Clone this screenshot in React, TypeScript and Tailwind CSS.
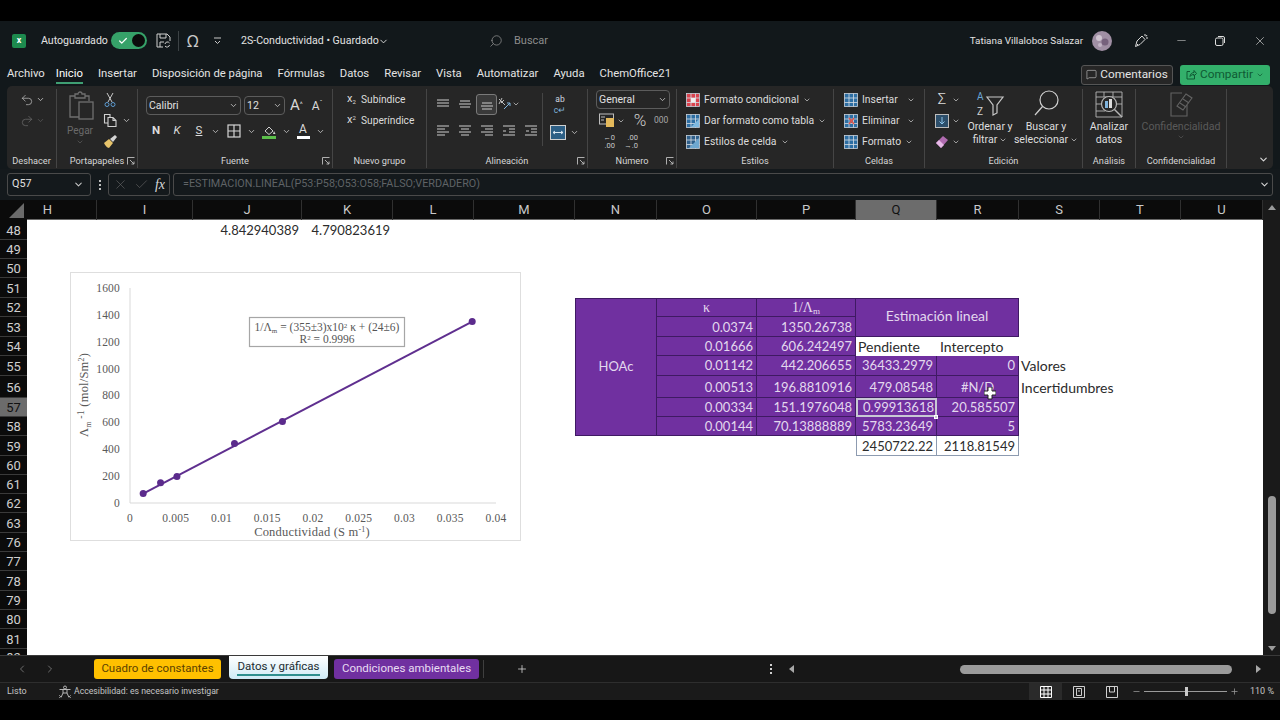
import type { ReactNode } from "react";
import { ChevronDown, ChevronLeft, ChevronRight, Check, X, Minus, Plus, Search, MessageSquare, Undo2, Redo2 } from "lucide-react";

const COLS = "grid-cols-[70px_96px_109px_91px_81px_101px_82px_100px_99px_81px_82px_81px_81px_82px]";
const ROWS = "grid-rows-[20px_19px_19px_20px_19px_20px_19px_20px_22px_19px_19px_20px_19px_19px_19px_20px_19px_19px_20px_19px_19px_20px_7px]";

const rowNums = [48, 49, 50, 51, 52, 53, 54, 55, 56, 57, 58, 59, 60, 61, 62, 63, 76, 77, 78, 79, 80, 81, 82];
const colNames = ["H", "I", "J", "K", "L", "M", "N", "O", "P", "Q", "R", "S", "T", "U"];

const points = [
  [0.0374, 1350.26738],
  [0.01666, 606.242497],
  [0.01142, 442.206655],
  [0.00513, 196.8810916],
  [0.00334, 151.1976048],
  [0.00144, 70.13888889],
];

function Chev({ c = "#c8c8c8", s = 9 }: { c?: string; s?: number }) {
  return <ChevronDown size={s} color={c} strokeWidth={2.2} className="shrink-0" />;
}

function Launcher() {
  return (
    <svg width="8" height="8" viewBox="0 0 8 8" fill="none" stroke="#bdbdbd" strokeWidth="0.9">
      <path d="M0.5 7.5V0.5H7.5M3 3L7 7M7 4.5V7H4.5" />
    </svg>
  );
}

function Group({ w, label, launcher, children }: { w: string; label: string; launcher?: boolean; children: ReactNode }) {
  return (
    <div className={`${w} shrink-0 h-full flex flex-col border-r border-[#454545]`}>
      <div className="h-[65px] flex">{children}</div>
      <div className="relative h-[14px] flex items-center justify-center text-[9.2px] text-[#d6d6d6]">
        {label}
        {launcher && (
          <span className="absolute right-[2px] top-[3px] flex">
            <Launcher />
          </span>
        )}
      </div>
    </div>
  );
}

function Row({ children, className = "" }: { children: ReactNode; className?: string }) {
  return <div className={`h-[21px] flex items-center ${className}`}>{children}</div>;
}

function Lines({ rows }: { rows: number[][] }) {
  return (
    <svg width="14" height="14" viewBox="0 0 14 14" stroke="#bdbdbd" strokeWidth="1.1">
      {rows.map((r, i) => (
        <line key={i} x1={r[0]} x2={r[1]} y1={r[2]} y2={r[2]} />
      ))}
    </svg>
  );
}

function ColorIcon({ kind }: { kind: "cond" | "table" | "cell" | "ins" | "del" | "fmt" }) {
  const fill = kind === "cond" ? "#d9434e" : kind === "cell" ? "#2f5f8a" : "#2d6ea3";
  return (
    <svg width="14" height="14" viewBox="0 0 14 14" className="shrink-0">
      <rect x="0.5" y="0.5" width="13" height="13" fill={fill} stroke="#c9d3dc" strokeWidth="0.8" />
      <path d="M0.5 5H13.5M0.5 9.5H13.5M5 0.5V13.5M9.5 0.5V13.5" stroke="#d5dde4" strokeWidth="0.8" />
      {kind === "table" && <path d="M5 13L13 5V13Z" fill="#7db8e0" />}
      {kind === "cell" && <path d="M3 13L13 3V13Z" fill="#6fa8d0" />}
      {kind === "del" && <path d="M5 4L10 10M10 4L5 10" stroke="#e0574f" strokeWidth="1.6" />}
      {kind === "cond" && <rect x="5" y="5" width="4.5" height="4.5" fill="#efefef" />}
    </svg>
  );
}

function TitleBar() {
  return (
    <div className="h-[39px] flex items-center bg-[#12181b] text-[11px] text-[#e2e2e2]">
      <div className="ml-[12px] w-[14px] h-[14px] rounded-[2px] bg-[#1d8a4e] flex items-center justify-center text-[9px] font-bold text-white">x</div>
      <span className="ml-[15px] w-[64px] mt-px text-[10.6px] whitespace-nowrap">Autoguardado</span>
      <div className="ml-[6px] w-[36px] h-[17px] rounded-full bg-[#36a269] flex items-center justify-between pl-[7px] pr-[2px]">
        <Check size={10} color="#fff" strokeWidth={3} />
        <span className="w-[13px] h-[13px] rounded-full bg-[#0c0c0c]" />
      </div>
      <svg className="ml-[9px]" width="15" height="15" viewBox="0 0 15 15" fill="none" stroke="#cfcfcf" strokeWidth="1">
        <path d="M1 1H11L14 4V8M1 1V14H7M4 1V5H10V1M4 14V9H8" />
        <path d="M9 11a2.5 2.5 0 0 1 4.5-1M13.5 12a2.5 2.5 0 0 1-4.5 1" />
      </svg>
      <span className="ml-[7px] w-px h-[20px] bg-[#3c4245]" />
      <span className="ml-[8px] w-[15px] text-[16px] leading-none text-[#c8c8c8] font-['Noto_Sans',sans-serif]">Ω</span>
      <svg className="ml-[11px]" width="9" height="9" viewBox="0 0 9 9" fill="none" stroke="#c8c8c8" strokeWidth="1">
        <path d="M1 2H8M2 5L4.5 7.5L7 5" />
      </svg>
      <span className="ml-[19px] w-[136px] mt-px text-[10.6px] whitespace-nowrap">2S-Conductividad • Guardado</span>
      <ChevronDown size={11} color="#e2e2e2" strokeWidth={2} className="ml-[1px] mt-px" />
      <Search size={14} color="#9a9a9a" strokeWidth={1.2} className="ml-[100px] -scale-x-100" />
      <span className="ml-[11px] mt-px text-[#8c8c8c]">Buscar</span>
      <div className="ml-auto flex items-center">
        <span className="mt-px text-[9.9px] whitespace-nowrap">Tatiana Villalobos Salazar</span>
        <svg className="ml-[9px]" width="20" height="20" viewBox="0 0 20 20">
          <circle cx="10" cy="10" r="10" fill="#a08fa4" />
          <circle cx="7" cy="7" r="3" fill="#cfc4d0" />
          <circle cx="13" cy="11" r="3.5" fill="#76617c" />
          <circle cx="8" cy="14" r="2" fill="#c2b4c6" />
        </svg>
        <svg className="ml-[22px]" width="15" height="15" viewBox="0 0 15 15" fill="none" stroke="#dcdcdc" strokeWidth="1">
          <path d="M1.5 13.5L3 8L8 3L11 6.5L6 11.5L1.5 13.5ZM3 11L4 12M11 1V3M13 2L12 3.5M14 5H12" />
        </svg>
        <Minus size={13} color="#dcdcdc" strokeWidth={1} className="ml-[26px]" />
        <svg className="ml-[27px]" width="10" height="10" viewBox="0 0 10 10" fill="none" stroke="#dcdcdc" strokeWidth="1">
          <rect x="0.5" y="2" width="7.5" height="7.5" rx="1.5" />
          <path d="M3 0.5H8A1.5 1.5 0 0 1 9.5 2V7" />
        </svg>
        <X size={14} color="#dcdcdc" strokeWidth={1.1} className="ml-[28px] mr-[13px]" />
      </div>
    </div>
  );
}

function MenuBar() {
  const items = ["Archivo", "Inicio", "Insertar", "Disposición de página", "Fórmulas", "Datos", "Revisar", "Vista", "Automatizar", "Ayuda", "ChemOffice21"];
  return (
    <div className="h-[26px] flex items-center bg-[#12181b] pl-[7px] text-[11.3px] text-[#e4e4e4]">
      <div className="flex items-center gap-[15px]">
        {items.map((t) => (
          <span key={t} className={`whitespace-nowrap border-b-2 leading-[17px] pt-[3px] ${t === "Inicio" ? "border-[#3f9f73] text-white -ml-[4px]" : "border-transparent"}`}>
            {t}
          </span>
        ))}
      </div>
      <div className="ml-auto flex items-center gap-[7px] mr-[10px] mt-[3px] text-[11.8px]">
        <div className="w-[92px] h-[20px] flex items-center justify-center gap-[3px] rounded-[3px] border border-[#555] bg-[#262626]">
          <MessageSquare size={11} color="#dedede" strokeWidth={1.2} />
          <span>Comentarios</span>
        </div>
        <div className="w-[90px] h-[20px] flex items-center justify-center gap-[3px] rounded-[3px] bg-[#33b06b] text-[#0f5a33]">
          <svg width="11" height="11" viewBox="0 0 11 11" fill="none" stroke="#0f5a33" strokeWidth="1">
            <path d="M4 2.5H1V10H8.5V7M4 7.5C4 5 6 3.5 8 3.5V1.5L10.5 4.5L8 7V5.5C6.5 5.5 5 6 4 7.5Z" />
          </svg>
          <span>Compartir</span>
          <Chev c="#0f5a33" s={8} />
        </div>
      </div>
    </div>
  );
}

function Select({ w, text }: { w: string; text: string }) {
  return (
    <div className={`${w} h-[19px] flex items-center justify-between rounded-[4px] border border-[#5c5c5c] px-[2px] text-[10.5px] text-[#e0e0e0]`}>
      <span>{text}</span>
      <Chev />
    </div>
  );
}

function Ribbon() {
  const big = "flex flex-col items-center text-[10.6px] leading-[13px] text-[#dedede]";
  return (
    <div className="mx-[7px] h-[83px] pt-[3px] pb-[1px] flex rounded-[5px] bg-[#262626] text-[#dcdcdc]">
      <Group w="w-[50px]" label="Deshacer">
        <div className="pl-[13px]">
          <Row className="gap-[2px]">
            <Undo2 size={14} color="#c4c4c4" strokeWidth={1.2} />
            <Chev />
          </Row>
          <Row className="gap-[2px]">
            <Redo2 size={14} color="#6e6e6e" strokeWidth={1.2} />
            <Chev c="#555" />
          </Row>
        </div>
      </Group>
      <Group w="w-[81px]" label="Portapapeles" launcher>
        <div className="w-[46px] flex flex-col items-center text-[10px] text-[#6a6a6a]">
          <svg className="mt-[2px] ml-[3px]" width="25" height="30" viewBox="0 0 25 30" fill="none" stroke="#6f6f6f" strokeWidth="1.3">
            <path d="M6 5H1V26H10M16 5H20V10M6 3H9A2 2 0 0 1 13 3H16V7H6Z" />
            <rect x="10" y="11" width="14" height="17" />
          </svg>
          <span className="mt-[2px]">Pegar</span>
          <Chev c="#5c5c5c" s={8} />
        </div>
        <div>
          <Row>
            <svg width="14" height="16" viewBox="0 0 14 16" fill="none" stroke="#c8c8c8" strokeWidth="1">
              <path d="M4 1L9 10M10 1L5 10" />
              <circle cx="4" cy="12.5" r="2" stroke="#5c9bd1" />
              <circle cx="10" cy="12.5" r="2" stroke="#5c9bd1" />
            </svg>
          </Row>
          <Row className="gap-[4px]">
            <svg width="15" height="15" viewBox="0 0 15 15" fill="none" stroke="#d0d0d0" strokeWidth="1.1">
              <path d="M5 10H1.5V1.5H7V4" />
              <path d="M5 4.5H10L13 7.5V13.5H5ZM10 4.5V7.5H13" />
            </svg>
            <Chev />
          </Row>
          <Row>
            <svg width="15" height="15" viewBox="0 0 15 15">
              <path d="M1 9L6 5L10 9L6 14C4 14 2 11 1 9Z" fill="#e7c46b" />
              <path d="M7 5L12 1L14 3L10 8Z" fill="#d4d4d4" />
            </svg>
          </Row>
        </div>
      </Group>
      <Group w="w-[195px]" label="Fuente" launcher>
        <div className="pl-[8px]">
          <div className="mt-[7px] flex items-center gap-[3px]">
            <Select w="w-[95px]" text="Calibri" />
            <Select w="w-[41px]" text="12" />
            <span className="ml-[2px] text-[15px] leading-none text-[#d8d8d8]">A<sup className="text-[7px]">^</sup></span>
            <span className="ml-[6px] text-[12px] leading-none text-[#d8d8d8]">A<sup className="text-[7px]">ˇ</sup></span>
          </div>
          <div className="mt-[6px] h-[20px] flex items-center">
            <span className="w-[20px] text-center text-[11.5px] font-bold">N</span>
            <span className="w-[22px] text-center text-[11.5px] italic">K</span>
            <span className="w-[22px] text-center text-[11.5px] underline">S</span>
            <span className="w-[10px] flex justify-center"><Chev /></span>
            <span className="w-[27px] flex justify-center">
              <svg width="14" height="14" viewBox="0 0 14 14" fill="none" stroke="#d4d4d4" strokeWidth="1.2">
                <rect x="1" y="1" width="12" height="12" />
                <path d="M1 7H13M7 1V13" />
              </svg>
            </span>
            <span className="w-[8px] flex justify-center"><Chev /></span>
            <span className="w-[27px] flex justify-center">
              <svg width="16" height="15" viewBox="0 0 16 15">
                <path d="M4 7L8 3L12 7L8 10.5Z" fill="none" stroke="#cfcfcf" strokeWidth="1" />
                <path d="M13 7L14.5 10H12Z" fill="#cfcfcf" />
                <rect x="1" y="12" width="14" height="3" fill="#5bbf4a" />
              </svg>
            </span>
            <span className="w-[8px] flex justify-center"><Chev /></span>
            <span className="w-[26px] flex flex-col items-center text-[12px] leading-[11px]">
              A<span className="w-[13px] h-[3px] bg-white mt-[1px]" />
            </span>
            <span className="w-[8px] flex justify-center"><Chev /></span>
          </div>
        </div>
      </Group>
      <Group w="w-[94px]" label="Nuevo grupo">
        <div className="pl-[14px] text-[10.2px]">
          <Row>
            <span className="w-[14px] text-[11px]">x<sub className="text-[6px]">2</sub></span>
            Subíndice
          </Row>
          <Row>
            <span className="w-[14px] text-[11px]">x<sup className="text-[6px]">2</sup></span>
            Superíndice
          </Row>
        </div>
      </Group>
      <Group w="w-[161px]" label="Alineación" launcher>
        <div className="w-[116px] pl-[5px] border-r border-[#454545] mt-[4px] mb-[8px]">
          <div className="h-[22px] flex items-center">
            <span className="w-[22px] flex justify-center"><Lines rows={[[1, 13, 3], [1, 13, 6], [1, 13, 9]]} /></span>
            <span className="w-[22px] flex justify-center"><Lines rows={[[2, 12, 4], [1, 13, 7], [2, 12, 10]]} /></span>
            <span className="w-[21px] h-[21px] flex items-center justify-center rounded-[3px] border border-[#7a7a7a] bg-[#3a3a3a]"><Lines rows={[[2, 12, 6], [1, 13, 9], [2, 12, 12]]} /></span>
            <span className="w-[23px] flex items-center justify-center gap-[1px]">
              <svg width="14" height="14" viewBox="0 0 14 14" fill="none" stroke="#bdbdbd" strokeWidth="1">
                <path d="M2 2L8 8M5 1L2 7M4 6L7 3" />
                <path d="M7 12L13 6M13 6H10M13 6V9" stroke="#7fb3dc" />
              </svg>
              <Chev s={8} />
            </span>
          </div>
          <div className="mt-[5px] h-[22px] flex items-center">
            <span className="w-[22px] flex justify-center"><Lines rows={[[1, 13, 2], [1, 9, 5], [1, 13, 8], [1, 9, 11]]} /></span>
            <span className="w-[22px] flex justify-center"><Lines rows={[[1, 13, 2], [3, 11, 5], [1, 13, 8], [3, 11, 11]]} /></span>
            <span className="w-[22px] flex justify-center"><Lines rows={[[1, 13, 2], [5, 13, 5], [1, 13, 8], [5, 13, 11]]} /></span>
            <span className="w-[22px] flex justify-center"><Lines rows={[[1, 13, 2], [7, 13, 5], [1, 4, 7], [7, 13, 8], [1, 13, 11]]} /></span>
            <span className="w-[22px] flex justify-center"><Lines rows={[[1, 13, 2], [7, 13, 5], [2, 5, 7], [7, 13, 8], [1, 13, 11]]} /></span>
          </div>
        </div>
        <div className="pl-[7px]">
          <div className="mt-[5px] h-[23px] w-[20px] flex flex-col items-center text-[8.5px] leading-[11px] text-[#cfd8e0]">
            <span>ab</span>
            <span className="text-[#7fb3dc]">c↵</span>
          </div>
          <div className="mt-[4px] h-[22px] flex items-center gap-[4px]">
            <svg width="16" height="15" viewBox="0 0 16 15" fill="none">
              <rect x="0.5" y="0.5" width="15" height="14" stroke="#d0d0d0" fill="#2d5f85" />
              <path d="M3 7.5H13M3 7.5L5 6M3 7.5L5 9M13 7.5L11 6M13 7.5L11 9" stroke="#d9e6f0" />
            </svg>
            <Chev />
          </div>
        </div>
      </Group>
      <Group w="w-[89px]" label="Número" launcher>
        <div className="pl-[8px]">
          <Select w="w-[74px] mt-px" text="General" />
          <div className="mt-[1px] h-[21px] flex items-center text-[#cfcfcf]">
            <svg className="ml-[3px]" width="16" height="15" viewBox="0 0 16 15">
              <rect x="0.5" y="1" width="14" height="10" fill="none" stroke="#bdbdbd" />
              <rect x="7" y="5" width="8" height="9" fill="#e4b95b" />
              <path d="M2 4H6M2 7H5" stroke="#bdbdbd" />
            </svg>
            <span className="ml-[2px]"><Chev s={8} /></span>
            <span className="ml-[5px] w-[20px] text-center text-[17px] font-light leading-none">%</span>
            <span className="ml-[4px] text-[8.5px] text-[#a8a8a8]">000</span>
          </div>
          <div className="h-[21px] flex items-center text-[7.5px] leading-[8px] text-[#c8c8c8]">
            <span className="ml-[3px] w-[16px] text-right">←0<br />.00</span>
            <span className="ml-[7px] w-[16px] text-right">.00<br />→.0</span>
          </div>
        </div>
      </Group>
      <Group w="w-[157px]" label="Estilos">
        <div className="pl-[9px] text-[10.4px]">
          <Row className="gap-[4px]">
            <ColorIcon kind="cond" />
            Formato condicional
            <Chev s={8} />
          </Row>
          <Row className="gap-[4px]">
            <ColorIcon kind="table" />
            Dar formato como tabla
            <Chev s={8} />
          </Row>
          <Row className="gap-[4px]">
            <ColorIcon kind="cell" />
            Estilos de celda
            <Chev s={8} />
          </Row>
        </div>
      </Group>
      <Group w="w-[91px]" label="Celdas">
        <div className="pl-[10px] text-[10.4px]">
          <Row className="gap-[4px]">
            <ColorIcon kind="ins" />
            <span className="w-[41px]">Insertar</span>
            <Chev s={8} />
          </Row>
          <Row className="gap-[4px]">
            <ColorIcon kind="del" />
            <span className="w-[41px]">Eliminar</span>
            <Chev s={8} />
          </Row>
          <Row className="gap-[4px]">
            <ColorIcon kind="fmt" />
            Formato
            <Chev s={8} />
          </Row>
        </div>
      </Group>
      <Group w="w-[158px]" label="Edición">
        <div className="w-[39px] pl-[10px]">
          <Row className="gap-[3px]">
            <span className="w-[14px] text-center text-[15px] font-light leading-none">Σ</span>
            <Chev s={8} />
          </Row>
          <Row className="gap-[3px]">
            <svg width="14" height="14" viewBox="0 0 14 14" fill="none">
              <rect x="0.5" y="0.5" width="13" height="13" fill="#2d4f6b" stroke="#bdbdbd" />
              <path d="M7 3V10M4.5 7.5L7 10L9.5 7.5" stroke="#8cc4ea" />
            </svg>
            <Chev s={8} />
          </Row>
          <Row className="gap-[3px]">
            <svg width="14" height="14" viewBox="0 0 14 14">
              <path d="M1 8L8 1L13 5L6 13Z" fill="#b06bb0" />
              <path d="M1 8L4 5L9 10L6 13Z" fill="#e6b8e6" />
            </svg>
            <Chev s={8} />
          </Row>
        </div>
        <div className={`w-[52px] ${big}`}>
          <svg className="h-[31px]" width="30" height="31" viewBox="0 0 30 31" fill="none">
            <text x="2" y="11" fontSize="10" fill="#6aa6d8" fontFamily="Roboto">A</text>
            <text x="2" y="26" fontSize="10" fill="#d4d4d4" fontFamily="Roboto">Z</text>
            <path d="M12 8H28L22 16V24L18 26V16Z" stroke="#c8c8c8" strokeWidth="1.2" />
          </svg>
          <span>Ordenar y</span>
          <span className="flex items-center gap-[2px]">filtrar <Chev s={8} /></span>
        </div>
        <div className={`w-[60px] ${big}`}>
          <svg className="h-[31px]" width="30" height="31" viewBox="0 0 30 31" fill="none" stroke="#d0d0d0" strokeWidth="1.2">
            <circle cx="18" cy="11" r="9" />
            <path d="M11.5 17.5L4 26" />
          </svg>
          <span>Buscar y</span>
          <span className="flex items-center gap-[2px] whitespace-nowrap">seleccionar <Chev s={8} /></span>
        </div>
      </Group>
      <Group w="w-[53px]" label="Análisis">
        <div className={`w-full ${big}`}>
          <svg className="h-[31px]" width="29" height="31" viewBox="0 0 29 31" fill="none" stroke="#b5b5b5">
            <path d="M1 3H27V28H1ZM1 8H27M1 15H6M1 22H10M22 15H27M9 3V8M18 3V8" strokeWidth="0.9" />
            <circle cx="14" cy="15" r="7.5" fill="#262626" strokeWidth="1.2" />
            <rect x="10" y="12" width="3" height="7" fill="#7fb3dc" stroke="none" />
            <rect x="14" y="10" width="3" height="9" fill="#dcdcdc" stroke="none" />
            <path d="M19.5 20.5L27 28" strokeWidth="1.4" />
          </svg>
          <span>Analizar</span>
          <span>datos</span>
        </div>
      </Group>
      <Group w="w-[91px]" label="Confidencialidad">
        <div className={`w-full ${big} !text-[#5a5a5a]`}>
          <svg className="h-[31px]" width="26" height="31" viewBox="0 0 26 31" fill="none" stroke="#636363" strokeWidth="1.1">
            <path d="M14 4H3V27H19V16" />
            <path d="M9 17L18 5L24 9L15 21Z" />
            <path d="M12 14L18 18M15 10L21 14" />
          </svg>
          <span className="whitespace-nowrap">Confidencialidad</span>
          <Chev c="#555" s={8} />
        </div>
      </Group>
      <div className="flex-1 flex items-end justify-center pb-[3px] pl-[26px]">
        <ChevronDown size={11} color="#d8d8d8" strokeWidth={2.5} />
      </div>
    </div>
  );
}

function FormulaBar() {
  return (
    <div className="h-[31px] flex px-[7px] py-[4px] bg-[#14191c] text-[10.8px]">
      <div className="w-[84px] flex items-center justify-between rounded-[3px] border border-[#4a4a4a] pl-[4px] pr-[6px] text-[#e0e0e0]">
        Q57
        <Chev s={11} />
      </div>
      <div className="w-[17px] flex flex-col items-center justify-center gap-[2px]">
        <span className="w-[2px] h-[2px] bg-[#bdbdbd]" />
        <span className="w-[2px] h-[2px] bg-[#bdbdbd]" />
        <span className="w-[2px] h-[2px] bg-[#bdbdbd]" />
      </div>
      <div className="w-[62px] flex items-center justify-between rounded-[3px] border border-[#4a4a4a] px-[4px]">
        <X size={15} color="#666" strokeWidth={1} />
        <Check size={15} color="#666" strokeWidth={1} />
        <span className="font-['Liberation_Serif',serif] italic text-[14px] text-[#d8d8d8]">fx</span>
      </div>
      <div className="ml-[3px] flex-1 flex items-center justify-between rounded-[3px] border border-[#4a4a4a] pl-[9px] pr-[2px] text-[#5f6366]">
        =ESTIMACION.LINEAL(P53:P58;O53:O58;FALSO;VERDADERO)
        <Chev s={11} c="#d8d8d8" />
      </div>
    </div>
  );
}

function ColHeaders() {
  return (
    <div className="h-[20px] flex bg-[#0b0b0b]">
      <div className="w-[27px] flex items-end justify-end pr-[3px] pb-[2px]">
        <span className="w-0 h-0 border-l-[15px] border-l-transparent border-b-[15px] border-b-[#6a6a6a]" />
      </div>
      <div className={`grid ${COLS} w-[1236px] border-b border-[#6a6a6a] text-[13px] text-[#c9c9c9]`}>
        {colNames.map((c) => (
          <div key={c} className={`flex items-center justify-center border-r border-[#303030] ${c === "Q" ? "bg-[#6c6c6c] text-[#111]" : ""} ${c === "H" ? "pr-[28px]" : ""}`}>
            {c}
          </div>
        ))}
      </div>
      <div className="flex-1 bg-[#1a1a1a] flex justify-center pt-[5px] pl-[1px]">
        <span className="w-0 h-0 border-x-[4px] border-x-transparent border-b-[5px] border-b-[#9a9a9a]" />
      </div>
    </div>
  );
}

function Chart() {
  const x = (v: number) => 130 + v * 9150;
  const y = (v: number) => 503 - v * 0.1344;
  const xt = ["0", "0.005", "0.01", "0.015", "0.02", "0.025", "0.03", "0.035", "0.04"];
  const yt = [0, 200, 400, 600, 800, 1000, 1200, 1400, 1600];
  return (
    <svg className="absolute left-[43px] top-[52px]" width="451" height="269" viewBox="70 272 451 269" fontFamily="Liberation Serif" fill="#595959">
      <rect x="70.5" y="272.5" width="450" height="268" fill="#fff" stroke="#dedede" />
      <path d="M130 288V503H496" fill="none" stroke="#d9d9d9" />
      {xt.map((t, i) => (
        <text key={t} x={130 + i * 45.75} y="522" fontSize="11.5" textAnchor="middle" letterSpacing="0.2">{t}</text>
      ))}
      {yt.map((t) => (
        <text key={t} x="120" y={y(t) + 4} fontSize="11.5" textAnchor="end" letterSpacing="0.2">{t}</text>
      ))}
      <line x1={x(0.00144)} y1={y(70)} x2={x(0.0374)} y2={y(1350)} stroke="#5f2f8f" strokeWidth="2" />
      {points.map((p) => (
        <circle key={p[0]} cx={x(p[0])} cy={y(p[1])} r="3.5" fill="#5b2b8c" />
      ))}
      <text x="312" y="536" fontSize="12.5" textAnchor="middle" letterSpacing="0.2">
        Conductividad (S m<tspan fontSize="8" dy="-4">-1</tspan><tspan dy="4">)</tspan>
      </text>
      <text transform="translate(88 395) rotate(-90)" fontSize="12.5" textAnchor="middle" letterSpacing="0.2">
        Λ<tspan fontSize="8" dy="3">m</tspan><tspan fontSize="10" dy="-7"> -1</tspan><tspan dy="4"> (mol/Sm</tspan><tspan fontSize="8" dy="-4">2</tspan><tspan dy="4">)</tspan>
      </text>
      <rect x="249.5" y="317.5" width="155" height="29" fill="#fff" stroke="#a6a6a6" strokeWidth="1.2" />
      <text x="327" y="331" fontSize="11.5" textAnchor="middle" fill="#555">
        1/Λ<tspan fontSize="7" dy="2">m</tspan><tspan dy="-2"> = (355±3)x10</tspan><tspan fontSize="7" dy="-3">2</tspan><tspan dy="3"> κ + (24±6)</tspan>
      </text>
      <text x="327" y="343" fontSize="11.5" textAnchor="middle" fill="#555">
        R<tspan fontSize="7" dy="-3">2</tspan><tspan dy="3"> = 0.9996</tspan>
      </text>
    </svg>
  );
}

function Cell({ pos, children, v = "right" }: { pos: string; children?: ReactNode; v?: "right" | "center" }) {
  return (
    <div className={`${pos} flex items-center ${v === "right" ? "justify-end pr-[3px]" : "justify-center"} bg-[#7030a0] border-r border-b border-[#3f1a63] text-[#e3d8ee]`}>
      {children}
    </div>
  );
}

function Sheet() {
  return (
    <div className="flex h-[435px]">
      <div className={`grid ${ROWS} w-[27px] bg-[#0b0b0b] text-[13px] text-[#cfcfcf] overflow-hidden`}>
        {rowNums.map((n) => (
          <div key={n} className={`flex justify-center border-b border-[#3a3a3a] leading-[15px] ${n === 82 ? "items-start pt-[1px]" : "items-center pt-[1px]"} ${n === 57 ? "bg-[#6c6c6c] text-[#111]" : ""}`}>
            {n}
          </div>
        ))}
      </div>
      <div className={`relative grid ${COLS} ${ROWS} w-[1236px] bg-white text-[13px] leading-none text-[#2c2c2c] font-['Lato',sans-serif] overflow-hidden`}>
        <div className="col-start-3 row-start-1 flex items-center justify-end pr-[3px]">4.842940389</div>
        <div className="col-start-4 row-start-1 flex items-center justify-end pr-[3px]">4.790823619</div>

        <Cell pos="col-start-7 row-start-5 row-span-7 border-l border-t pb-[2px]" v="center">HOAc</Cell>
        <Cell pos="col-start-8 row-start-5 border-t" v="center"><span className="font-['Liberation_Serif',serif] text-[14px]">κ</span></Cell>
        <Cell pos="col-start-9 row-start-5 border-t" v="center"><span className="font-['Liberation_Serif',serif] text-[14px]">1/Λ<sub className="text-[9px]">m</sub></span></Cell>
        <Cell pos="col-start-10 col-span-2 row-start-5 row-span-2 border-t pb-[3px] text-[14px]" v="center">Estimación lineal</Cell>

        <Cell pos="col-start-8 row-start-6 pt-px">0.0374</Cell>
        <Cell pos="col-start-9 row-start-6 pt-px">1350.26738</Cell>
        <Cell pos="col-start-8 row-start-7">0.01666</Cell>
        <Cell pos="col-start-9 row-start-7">606.242497</Cell>
        <div className="col-start-10 row-start-7 flex items-center pl-[2px] text-[14px]">Pendiente</div>
        <div className="col-start-11 row-start-7 flex items-center pl-[3px] text-[14px]">Intercepto</div>
        <Cell pos="col-start-8 row-start-8">0.01142</Cell>
        <Cell pos="col-start-9 row-start-8">442.206655</Cell>
        <Cell pos="col-start-10 row-start-8">36433.2979</Cell>
        <Cell pos="col-start-11 row-start-8">0</Cell>
        <div className="col-start-12 row-start-8 flex items-center pl-[2px] text-[14px]">Valores</div>
        <Cell pos="col-start-8 row-start-9 pt-px">0.00513</Cell>
        <Cell pos="col-start-9 row-start-9 pt-px">196.8810916</Cell>
        <Cell pos="col-start-10 row-start-9 pt-px">479.08548</Cell>
        <Cell pos="col-start-11 row-start-9 pt-px" v="center">#N/D</Cell>
        <div className="col-start-12 col-span-2 row-start-9 flex items-center pl-[2px] pt-px text-[14px]">Incertidumbres</div>
        <Cell pos="col-start-8 row-start-10">0.00334</Cell>
        <Cell pos="col-start-9 row-start-10">151.1976048</Cell>
        <div className="col-start-10 row-start-10 flex items-center justify-end pr-[1px] bg-[#7030a0] border-2 border-[#c8c8d4] text-[#e3d8ee]">0.99913618</div>
        <Cell pos="col-start-11 row-start-10">20.585507</Cell>
        <Cell pos="col-start-8 row-start-11">0.00144</Cell>
        <Cell pos="col-start-9 row-start-11">70.13888889</Cell>
        <Cell pos="col-start-10 row-start-11">5783.23649</Cell>
        <Cell pos="col-start-11 row-start-11">5</Cell>
        <div className="col-start-10 row-start-12 flex items-center justify-end pr-[3px] pt-px border border-t-0 border-[#8d9bb0]">2450722.22</div>
        <div className="col-start-11 row-start-12 flex items-center justify-end pr-[3px] pt-px border border-l-0 border-t-0 border-[#8d9bb0]">2118.81549</div>

        <Chart />
        <span className="absolute left-[907px] top-[195px] w-[4px] h-[4px] bg-[#c8c8d4] border border-white" />
        <svg className="absolute left-[957px] top-[167px]" width="12" height="14" viewBox="0 0 12 14">
          <path d="M4 0H8V4H12V8H8V12H4V8H0V4H4Z" fill="#fff" stroke="#222" strokeWidth="1" />
        </svg>
      </div>
      <div className="flex-1 bg-[#1a1a1a] flex flex-col items-center justify-end pl-[1px]">
        <span className="w-[8px] h-[118px] rounded-full bg-[#9a9a9a] mb-[32px]" />
        <span className="w-0 h-0 border-x-[4px] border-x-transparent border-t-[5px] border-t-[#9a9a9a] mb-[4px]" />
      </div>
    </div>
  );
}

function TabBar() {
  return (
    <div className="h-[27px] flex items-center bg-[#171717] border-t border-[#3a3a3a] text-[11.5px]">
      <ChevronLeft size={12} color="#8a8a8a" strokeWidth={1.5} className="ml-[16px]" />
      <ChevronRight size={12} color="#8a8a8a" strokeWidth={1.5} className="ml-[16px]" />
      <div className="ml-[38px] w-[127px] h-[20px] flex items-center justify-center rounded-[3px] bg-[#ffc000] text-[#5a4000]">Cuadro de constantes</div>
      <div className="ml-[8px] w-[99px] h-[23px] self-start flex items-center justify-center rounded-b-[4px] bg-gradient-to-b from-white to-[#cfeaf6] text-[#1c2b30]">
        <span className="border-b-2 border-[#2f8f8f] leading-[15px]">Datos y gráficas</span>
      </div>
      <div className="ml-[6px] w-[145px] h-[20px] flex items-center justify-center rounded-[3px] bg-[#7030a0] text-[#e8dcf2]">Condiciones ambientales</div>
      <span className="ml-[4px] w-px h-[18px] bg-[#3f3f3f]" />
      <Plus size={12} color="#d8d8d8" strokeWidth={1.6} className="ml-[32px]" />
      <div className="ml-[242px] flex flex-col gap-[2px]">
        <span className="w-[2px] h-[2px] bg-[#cfcfcf]" />
        <span className="w-[2px] h-[2px] bg-[#cfcfcf]" />
        <span className="w-[2px] h-[2px] bg-[#cfcfcf]" />
      </div>
      <span className="ml-[17px] w-0 h-0 border-y-[4px] border-y-transparent border-r-[5px] border-r-[#a8a8a8]" />
      <span className="ml-[166px] w-[272px] h-[9px] rounded-full bg-[#9b9b9b]" />
      <span className="ml-[24px] w-0 h-0 border-y-[4px] border-y-transparent border-l-[5px] border-l-[#a8a8a8]" />
    </div>
  );
}

function StatusBar() {
  return (
    <div className="h-[18px] flex items-center bg-[#1a1a1a] border-t border-[#2e2e2e] pl-[7px] pr-[6px] text-[8.7px] text-[#c4c4c4]">
      <span className="w-[51px] text-[9px]">Listo</span>
      <svg width="14" height="14" viewBox="0 0 14 14" fill="none" stroke="#c4c4c4" strokeWidth="0.9">
        <circle cx="7" cy="2.5" r="1.5" />
        <path d="M1.5 4.5H12.5M5 4.5V8L3 12.5M9 4.5V8L11 12.5M5 8H9" />
        <path d="M1 10L3 12M11 12L13 10M1 13L3 11M13 13L11 11" strokeDasharray="1 1" />
      </svg>
      <span className="ml-[2px]">Accesibilidad: es necesario investigar</span>
      <div className="ml-auto flex items-center">
        <span className="w-[33px] h-[17px] flex items-center justify-center bg-[#2a2a2a]">
          <svg width="12" height="12" viewBox="0 0 12 12" fill="none" stroke="#fff" strokeWidth="1">
            <path d="M0.5 0.5H11.5V11.5H0.5ZM0.5 4H11.5M0.5 8H11.5M4 0.5V11.5M8 0.5V11.5" />
          </svg>
        </span>
        <span className="w-[33px] flex justify-center">
          <svg width="12" height="12" viewBox="0 0 12 12" fill="none" stroke="#cfcfcf" strokeWidth="1">
            <path d="M0.5 0.5H11.5V11.5H0.5ZM3.5 2.5H8.5V9.5H3.5ZM5 5H7" />
          </svg>
        </span>
        <span className="w-[33px] flex justify-center">
          <svg width="12" height="12" viewBox="0 0 12 12" fill="none" stroke="#cfcfcf" strokeWidth="1">
            <path d="M0.5 0.5H11.5V11.5H0.5ZM3.5 0.5V6H8.5V0.5" />
          </svg>
        </span>
        <Minus size={9} color="#9a9a9a" strokeWidth={2} className="ml-[4px]" />
        <div className="ml-[3px] w-[83px] h-[9px] flex items-center">
          <span className="w-[41px] h-px bg-[#9a9a9a]" />
          <span className="w-[3px] h-[9px] bg-[#c8c8c8]" />
          <span className="w-[39px] h-px bg-[#9a9a9a]" />
        </div>
        <Plus size={9} color="#9a9a9a" strokeWidth={2} className="ml-[3px]" />
        <span className="ml-[11px] w-[24px] text-[9px] whitespace-nowrap">110 %</span>
      </div>
    </div>
  );
}

export default function App() {
  return (
    <div className="w-[1280px] h-screen bg-black pt-[21px] pb-[20px] overflow-hidden font-['Roboto',sans-serif]">
      <TitleBar />
      <MenuBar />
      <div className="bg-[#12181b]">
        <Ribbon />
      </div>
      <FormulaBar />
      <ColHeaders />
      <Sheet />
      <TabBar />
      <StatusBar />
    </div>
  );
}
